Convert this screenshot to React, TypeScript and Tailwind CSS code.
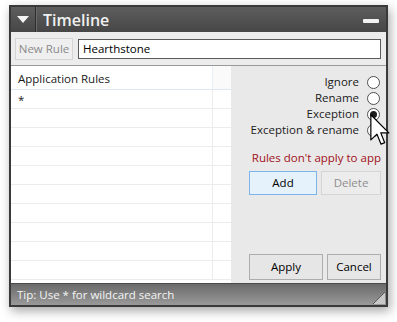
import React from "react";

const font = { fontFamily: '"Open Sans", "Noto Sans", "Liberation Sans", sans-serif' };

function Radio({ label, checked }: { label: string; checked?: boolean }) {
  return (
    <div className="flex h-[16px] items-center justify-end gap-[8px]">
      <span className="text-[11.5px] leading-none text-[#1a1a1a]">{label}</span>
      <span className="flex h-[13px] w-[13px] items-center justify-center rounded-full border border-[#505050] bg-white">
        {checked && <span className="h-[7px] w-[7px] rounded-full bg-[#1c1c1c]" />}
      </span>
    </div>
  );
}

export default function App() {
  const rows = [0, 1, 2, 3, 4, 5, 6, 7, 8, 9];
  return (
    <div className="relative h-[322px] w-[397px] bg-white" style={font}>
      <div className="absolute left-[9px] top-[5px] flex h-[302px] w-[379px] flex-col border-2 border-[#3a3a3a] bg-[#ececec] shadow-[2px_4px_10px_rgba(0,0,0,0.35)]">
        {/* Title bar */}
        <div className="flex h-[25px] items-center bg-gradient-to-b from-[#5e5e5e] to-[#464646]">
          <div className="flex h-full w-[25px] items-center justify-center border-r border-[#2e2e2e]">
            <svg width="12" height="7" viewBox="0 0 12 7">
              <path d="M0 0 L12 0 L6 7 Z" fill="#f4f4f4" />
            </svg>
          </div>
          <div className="h-full w-px bg-[#6a6a6a]" />
          <span className="ml-[6px] text-[16px] font-semibold leading-none text-[#f0f0f0]">Timeline</span>
          <div className="ml-auto mr-[7px] mt-[2px] h-[4px] w-[16px] rounded-[1px] bg-[#f2f2f2]" />
        </div>
        {/* Toolbar */}
        <div className="flex h-[34px] items-center gap-[5px] border-b border-[#9a9a9a] bg-[#ececec] pl-[4px] pr-[5px]">
          <div className="flex h-[22px] w-[58px] items-center justify-center border border-[#d4d4d4] bg-[#efefef] text-[11.5px] text-[#8a8a8a]">
            New Rule
          </div>
          <div className="flex h-[20px] flex-1 items-center border border-[#5a5a5a] bg-white pl-[4px] text-[11.5px] text-black">
            Hearthstone
          </div>
        </div>
        {/* Main area */}
        <div className="flex flex-1 overflow-hidden">
          <div className="flex w-[220px] flex-col bg-white">
            <div className="flex h-[24px] border-b border-[#dde8f5]">
              <div className="flex w-[202px] items-center border-r border-[#e8eef6] pl-[7px] pt-[2px] text-[11.5px] text-[#1a1a1a]">
                Application Rules
              </div>
              <div className="flex-1 bg-[#fafafa]" />
            </div>
            {rows.map((r) => (
              <div key={r} className="flex h-[19px] border-b border-[#ececec]">
                <div className="flex w-[202px] items-center border-r border-[#ececec] pl-[7px] pt-[2px] text-[11.5px] text-[#1a1a1a]">
                  {r === 0 ? "*" : ""}
                </div>
                <div className="flex-1" />
              </div>
            ))}
          </div>
          <div className="flex flex-1 flex-col bg-[#e9e9e9] pb-[3px] pr-[5px] pt-[8px]">
            <div className="flex flex-col pr-[1px]">
              <Radio label="Ignore" />
              <Radio label="Rename" />
              <Radio label="Exception" checked />
              <Radio label="Exception & rename" />
            </div>
            <div className="mt-[12px] text-right text-[11.5px] leading-[16px] text-[#a01020]">
              Rules don't apply to app
            </div>
            <div className="mt-[5px] flex justify-end gap-[4px]">
              <div className="flex h-[24px] w-[68px] items-center justify-center border border-[#7eb4ea] bg-[#e5f1fb] text-[11.5px] text-black">
                Add
              </div>
              <div className="flex h-[24px] w-[60px] items-center justify-center border border-[#d5d5d5] bg-[#ececec] text-[11.5px] text-[#8c8c8c]">
                Delete
              </div>
            </div>
            <div className="mt-auto flex justify-end gap-[4px]">
              <div className="flex h-[26px] w-[74px] items-center justify-center border border-[#adadad] bg-[#e6e6e6] text-[11.5px] text-black">
                Apply
              </div>
              <div className="flex h-[26px] w-[54px] items-center justify-center border border-[#adadad] bg-[#e6e6e6] text-[11.5px] text-black">
                Cancel
              </div>
            </div>
          </div>
        </div>
        {/* Status bar */}
        <div className="relative flex h-[22px] items-center border-t border-[#4a4a4a] bg-gradient-to-b from-[#6a6a6a] to-[#9a9a9a] pl-[6px] text-[11.5px] text-[#f4f4f4]">
          Tip: Use * for wildcard search
          <svg className="absolute bottom-[1px] right-[1px]" width="12" height="12" viewBox="0 0 12 12">
            <path d="M12 0 L12 12 L0 12 Z" fill="#c8c8c8" />
            <path d="M12 0 L0 12" stroke="#5a5a5a" strokeWidth="1" />
          </svg>
        </div>
      </div>
      {/* Cursor */}
      <svg className="absolute left-[370px] top-[114px]" width="20" height="32" viewBox="0 0 13 21">
        <path d="M0.5 0.5 L0.5 17 L4.5 13.2 L7.2 19.8 L9.6 18.8 L7 12.4 L12.3 12.4 Z" fill="white" stroke="black" strokeWidth="0.8" strokeLinejoin="round" />
      </svg>
    </div>
  );
}
